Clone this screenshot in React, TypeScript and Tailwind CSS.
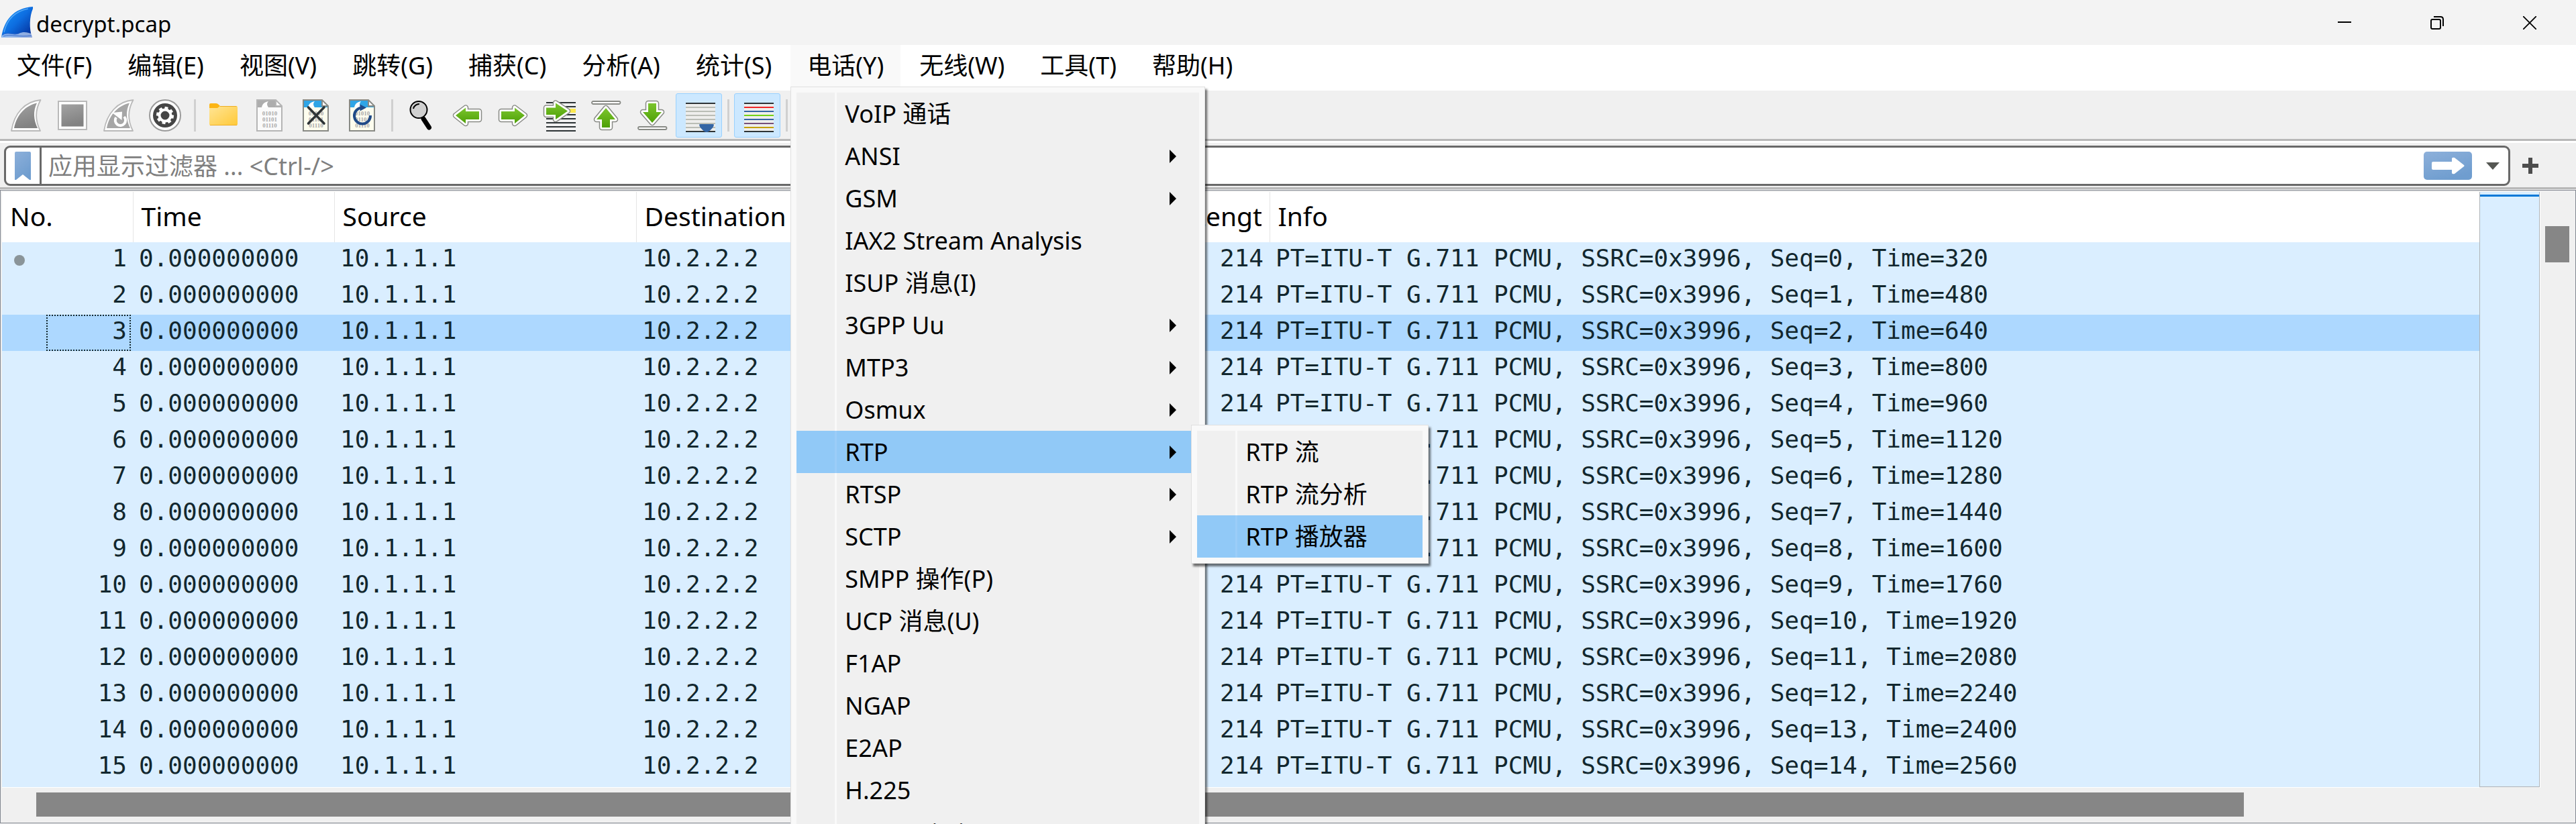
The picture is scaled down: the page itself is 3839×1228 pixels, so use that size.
import React from "react";

type MenuEntry = { label: string; submenu?: boolean };

const menuBar = [
  "文件(F)", "编辑(E)", "视图(V)", "跳转(G)", "捕获(C)", "分析(A)",
  "统计(S)", "电话(Y)", "无线(W)", "工具(T)", "帮助(H)",
];

const telephonyMenu: MenuEntry[] = [
  { label: "VoIP 通话" },
  { label: "ANSI", submenu: true },
  { label: "GSM", submenu: true },
  { label: "IAX2 Stream Analysis" },
  { label: "ISUP 消息(I)" },
  { label: "3GPP Uu", submenu: true },
  { label: "MTP3", submenu: true },
  { label: "Osmux", submenu: true },
  { label: "RTP", submenu: true },
  { label: "RTSP", submenu: true },
  { label: "SCTP", submenu: true },
  { label: "SMPP 操作(P)" },
  { label: "UCP 消息(U)" },
  { label: "F1AP" },
  { label: "NGAP" },
  { label: "E2AP" },
  { label: "H.225" },
  { label: "SIP Statistics" },
];

const rtpMenu = ["RTP 流", "RTP 流分析", "RTP 播放器"];

const packets = Array.from({ length: 15 }, (_, i) => ({
  no: i + 1,
  time: "0.000000000",
  source: "10.1.1.1",
  destination: "10.2.2.2",
  length: 214,
  info: `PT=ITU-T G.711 PCMU, SSRC=0x3996, Seq=${i}, Time=${320 + i * 160}`,
}));

function WiresharkLogo() {
  return (
    <svg className="h-[47px] w-[48px] shrink-0" viewBox="0 0 48 47" aria-hidden="true">
      <defs>
        <linearGradient id="logo" x1="0" y1="0" x2="1" y2="1">
          <stop offset="0" stopColor="#1a9cff" />
          <stop offset="0.5" stopColor="#0d6de0" />
          <stop offset="1" stopColor="#04268f" />
        </linearGradient>
      </defs>
      <path d="M47 0C18 2 4 20 0 46H46C41 33 42 14 47 3Z" fill="url(#logo)" />
      <path d="M1 43C10 36 18 44 26 40S40 39 45 40L46 46H0Z" fill="#c9dcf6" opacity="0.7" />
      <path d="M2 42C10 37 18 43 26 40M3 44C14 40 26 46 45 43" stroke="#3b6fd0" fill="none" />
      <path d="M40 3C20 7 8 20 4 38" stroke="#7fc6ff" strokeWidth="1.5" fill="none" opacity="0.6" />
    </svg>
  );
}

function Icon({ children }: { children: React.ReactNode }) {
  return (
    <svg className="h-[48px] w-[49px] overflow-visible" viewBox="0 0 49 48" aria-hidden="true">
      {children}
    </svg>
  );
}

function Fin({ fill }: { fill: string }) {
  return (
    <>
      <path d="M45.5 1C22 3 6 21 2 47H45C38 33 36 18 45.5 1Z" fill="#fff" stroke="#b9b9b9" strokeWidth="1.8" strokeLinejoin="round" />
      <path d="M40 5.5C24 9 10 22 6 43H41C35 30 34 18 40 5.5Z" fill={fill} />
    </>
  );
}

function Arrow({ d }: { d: string }) {
  return (
    <>
      <path d={d} fill="none" stroke="#888a85" strokeWidth="8.5" strokeLinejoin="round" />
      <path d={d} fill="none" stroke="#fff" strokeWidth="5.5" strokeLinejoin="round" />
      <path d={d} fill="url(#green)" />
    </>
  );
}

function FileIcon({ gray, children }: { gray?: boolean; children?: React.ReactNode }) {
  return (
    <Icon>
      <path d="M5 1H33L42 10V47H5Z" fill={gray ? "#fafafa" : "#fdfdee"} />
      <path d="M5 1H33L42 10V12H5Z" fill={gray ? "#adadad" : "#2fa5e6"} />
      <path d="M12 12C13 7 16 4 22 3C19 6 20 9 22 12Z" fill="#fff" />
      <path d="M33 1V10H42Z" fill="#fff" />
      <path d="M5 1H33L42 10V47H5ZM33 1V10H42" fill="none" stroke={gray ? "#b5b5b5" : "#888a85"} strokeWidth="2" />
      <g fontFamily="Liberation Serif" fontSize="9" fill="#aaaaaa" textAnchor="middle" fontWeight="bold">
        <text x="24" y="24">01010</text>
        <text x="24" y="33">01101</text>
        <text x="24" y="42">01110</text>
      </g>
      {children}
    </Icon>
  );
}

function Stripes({ colors }: { colors: string[] }) {
  return (
    <>
      <rect x="5" y="5" width="44" height="44" fill="#eeeeec" />
      {colors.map((c, i) => (
        <rect key={i} x="5" y={5 + i * 6} width="44" height="2" fill={c} />
      ))}
    </>
  );
}

const gearTeeth = [0, 45, 90, 135, 180, 225, 270, 315];
const ink = "#2e3436";
const pale = "#babdb6";

const tools: ({ name: string; icon: React.ReactNode; checked?: boolean } | null)[] = [
  { name: "开始捕获", icon: <Icon><Fin fill="url(#gray)" /></Icon> },
  {
    name: "停止捕获",
    icon: (
      <Icon>
        <rect x="3" y="3" width="42" height="42" fill="#fff" stroke="#b9b9b9" strokeWidth="2" />
        <rect x="7.5" y="7.5" width="33" height="33" fill="url(#gray)" />
      </Icon>
    ),
  },
  {
    name: "重新开始捕获",
    icon: (
      <Icon>
        <Fin fill="#a6a6a6" />
        <path d="M20 27A7.7 7.7 0 1 0 32 26" fill="none" stroke="#fff" strokeWidth="4" />
        <path d="M14 20L29 18.500L28.500 31Z" fill="#fff" />
      </Icon>
    ),
  },
  {
    name: "捕获选项",
    icon: (
      <Icon>
        <circle cx="24" cy="24" r="23" fill="#fff" stroke="#9a9a9a" strokeWidth="2" />
        <circle cx="24" cy="24" r="18" fill="#454545" />
        <circle cx="24" cy="24" r="8.500" fill="none" stroke="#fff" strokeWidth="4" />
        {gearTeeth.map((a) => (
          <rect key={a} x="21.500" y="11" width="5" height="5" fill="#fff" transform={`rotate(${a + 10} 24 24)`} />
        ))}
      </Icon>
    ),
  },
  null,
  {
    name: "打开",
    icon: (
      <Icon>
        <path d="M3 8Q3 6 5 6H13Q15 6 17 8L19 10V16H3Z" fill="#fcb514" />
        <path d="M3 13H15L19 10H43Q45 10 45 12V37Q45 39 43 39H5Q3 39 3 37Z" fill="url(#folder)" />
        <path d="M19 10.500H43.500M4 38.500H44" stroke="#eead22" />
      </Icon>
    ),
  },
  { name: "保存", icon: <FileIcon gray /> },
  {
    name: "关闭文件",
    icon: <FileIcon><path d="M12.500 12L36 36M36 12L12.500 36" stroke={ink} strokeWidth="3.600" strokeLinecap="round" /></FileIcon>,
  },
  {
    name: "重新加载",
    icon: (
      <FileIcon>
        <path d="M36 24A12 12 0 1 1 23 12.500" fill="none" stroke="#204a87" strokeWidth="4" />
        <path d="M20.500 7.500L30 12.500L20.500 17.500Z" fill="#204a87" />
      </FileIcon>
    ),
  },
  null,
  {
    name: "查找分组",
    icon: (
      <Icon>
        <path d="M28 29L36.500 42" stroke="#000" strokeWidth="7" strokeLinecap="round" />
        <circle cx="21" cy="15.500" r="12.500" fill="#d0d0d0" stroke="#000" strokeWidth="2" />
        <path d="M13 14A9 9 0 0 1 22 7" fill="none" stroke="#000" strokeWidth="2" />
      </Icon>
    ),
  },
  { name: "后退", icon: <Icon><Arrow d="M7 24L22 12.500V18H42V30H22V36Z" /></Icon> },
  { name: "前进", icon: <Icon><Arrow d="M41 24L26 12.500V18H6V30H26V36Z" /></Icon> },
  {
    name: "转到分组",
    icon: (
      <Icon>
        {[4, 10, 22, 28, 34, 40, 46].map((y) => (
          <rect key={y} x="4" y={y} width="44" height="2" fill={ink} />
        ))}
        <rect x="24" y="14" width="24" height="6" fill="#fce94f" />
        <Arrow d="M36 17.500L18 5.500V12.500H4V23H18V30Z" />
      </Icon>
    ),
  },
  {
    name: "首个分组",
    icon: (
      <Icon>
        <rect x="3" y="3" width="42.500" height="4" rx="2" fill="#fff" stroke="#888a85" strokeWidth="1.800" />
        <Arrow d="M24 13L38 30H30V42H18V30H10Z" />
      </Icon>
    ),
  },
  {
    name: "最新分组",
    icon: (
      <Icon>
        <rect x="3" y="41" width="42.500" height="4" rx="2" fill="#fff" stroke="#888a85" strokeWidth="1.800" />
        <Arrow d="M24 35L38 19H30V6H18V19H10Z" />
      </Icon>
    ),
  },
  {
    name: "自动滚动",
    checked: true,
    icon: (
      <Icon>
        <Stripes colors={[ink, pale, pale, pale, pale, pale, pale, ink]} />
        <path d="M25 38Q25 37 27 37H45Q47 37 47 38Q46 43 39 48Q36 50 33 48Q26 43 25 38Z" fill="#3465a4" />
      </Icon>
    ),
  },
  null,
  {
    name: "分组着色",
    checked: true,
    icon: <Icon><Stripes colors={[ink, "#ef2929", "#3465a4", "#73d216", "#3465a4", "#75507b", "#c4a000", ink]} /></Icon>,
  },
  null,
];

function MenuRow({ label, submenu, active, children }: MenuEntry & { active?: boolean; children?: React.ReactNode }) {
  return (
    <li className="relative">
      <button
        type="button"
        className={`flex h-[63px] w-full items-center text-left ${active ? "bg-[#91c9f7]" : ""}`}
      >
        <span className={`h-full w-[60px] shrink-0 border-r-[3px] ${active ? "border-[#9bcdf8]" : "border-[#f9f9f9]"}`} />
        <span className="flex-1 whitespace-nowrap pl-3">{label}</span>
        {submenu && (
          <svg className="mr-[34px] h-[20px] w-[10px]" viewBox="0 0 10 20" aria-hidden="true">
            <path d="M0 0L10 10L0 20Z" />
          </svg>
        )}
      </button>
      {children}
    </li>
  );
}

const popup =
  "absolute border border-[#e0e0e0] bg-[#f9f9f9] p-2 shadow-[3px_4px_3px_rgba(0,0,0,0.55)]";

function TelephonyMenu() {
  return (
    <div className={`${popup} left-0 top-full z-10 w-[618px]`}>
      <ul className="bg-[#f0f0f0]">
        {telephonyMenu.map((m) => (
          <MenuRow key={m.label} {...m} active={m.label === "RTP"}>
            {m.label === "RTP" && (
              <div className={`${popup} -top-[9px] left-full -ml-3 w-[354px]`}>
                <ul className="bg-[#f0f0f0]">
                  {rtpMenu.map((label) => (
                    <MenuRow key={label} label={label} active={label === "RTP 播放器"} />
                  ))}
                </ul>
              </div>
            )}
          </MenuRow>
        ))}
      </ul>
    </div>
  );
}

function TitleBar() {
  return (
    <header className="flex h-[67px] shrink-0 items-stretch bg-[#f3f3f3]">
      <div className="flex flex-1 items-center gap-1 pl-0.5">
        <WiresharkLogo />
        <h1 className="pt-1 text-[33px] leading-[48px]">decrypt.pcap</h1>
      </div>
      <button type="button" aria-label="最小化" className="flex w-[138px] items-center justify-center">
        <svg className="h-[20px] w-[20px]" viewBox="0 0 20 20"><path d="M0 9H20" stroke="#000" strokeWidth="2" /></svg>
      </button>
      <button type="button" aria-label="还原" className="flex w-[138px] items-center justify-center">
        <svg className="h-[20px] w-[20px]" viewBox="0 0 20 20" fill="none" stroke="#000" strokeWidth="2">
          <rect x="1" y="5" width="14" height="14" rx="2" />
          <path d="M5 1H15Q19 1 19 5V15" />
        </svg>
      </button>
      <button type="button" aria-label="关闭" className="flex w-[138px] items-center justify-center">
        <svg className="h-[20px] w-[20px]" viewBox="0 0 20 20" stroke="#000" strokeWidth="1.800">
          <path d="M0 0L20 20M20 0L0 20" />
        </svg>
      </button>
    </header>
  );
}

function MenuBar() {
  return (
    <nav className="flex h-[68px] shrink-0 items-start gap-[3px] border-b-2 border-white bg-white">
      {menuBar.map((label) => {
        const open = label === "电话(Y)";
        return (
          <div key={label} className="relative">
            <button
              type="button"
              className={`h-[62px] whitespace-nowrap px-[25px] ${open ? "bg-[#f9f9f9]" : ""}`}
            >
              {label}
            </button>
            {open && <TelephonyMenu />}
          </div>
        );
      })}
    </nav>
  );
}

function ToolBar() {
  return (
    <div className="flex h-[78px] shrink-0 items-start border-b-[3px] border-white bg-[#f0f0f0]">
      <div className="flex h-[75px] flex-1 items-start border-b-[3px] border-[#b8b8b8] pl-[5px] pt-1">
        {tools.map((t, i) =>
          t ? (
            <button
              key={t.name}
              type="button"
              aria-label={t.name}
              className={`flex h-[66px] w-[69px] items-center justify-center rounded-[3px] ${
                t.checked ? "border border-[#99d1ff] bg-[#cce8ff]" : ""
              }`}
            >
              {t.icon}
            </button>
          ) : (
            <span key={i} className="flex h-[66px] w-[18px] items-center justify-center">
              <span className="h-[48px] w-[3px] bg-[#d0d0d0]" />
            </span>
          ),
        )}
      </div>
    </div>
  );
}

function FilterBar() {
  return (
    <div className="flex h-[69px] shrink-0 items-start border-b-[3px] border-[#b8b8b8] bg-[#f0f0f0] pl-1.5 pt-1">
      <div className="flex h-[60px] flex-1 items-stretch rounded-[9px] border-[3px] border-[#696969] bg-white">
        <button type="button" aria-label="书签" className="flex w-[53px] items-center justify-center border-r-[3px] border-[#696969]">
          <svg className="h-[42px] w-[24px]" viewBox="0 0 24 42">
            <path d="M0 2Q0 0 2 0H22Q24 0 24 2V42H22L12 34L2 42H0Z" fill="url(#blue)" />
          </svg>
        </button>
        <input
          type="text"
          aria-label="显示过滤器"
          placeholder="应用显示过滤器 ... <Ctrl-/>"
          className="min-w-0 flex-1 bg-transparent pl-2.5 pt-0.5 outline-none placeholder:text-[#7f7f7f]"
        />
        <button type="button" aria-label="应用" className="mr-[18px] flex items-center">
          <svg className="h-[42px] w-[72px]" viewBox="0 0 72 42">
            <rect width="72" height="42" rx="5" fill="url(#blue)" />
            <path d="M14 15H42V10Q43 8 46 9L60 20Q61 21 60 22L46 33Q43 34 42 32V27H14Q12 27 12 25V17Q12 15 14 15Z" fill="#fff" />
          </svg>
        </button>
        <button type="button" aria-label="历史" className="mr-[10px] flex w-[26px] items-center justify-center">
          <svg className="h-[12px] w-[20px]" viewBox="0 0 20 12"><path d="M0 1H20L10 12Z" fill="#555753" /></svg>
        </button>
      </div>
      <button type="button" aria-label="添加" className="flex h-[60px] w-[98px] items-center pl-[18px]">
        <svg className="h-[24px] w-[24px]" viewBox="0 0 24 24"><path d="M12 0V24M0 12H24" stroke="#4d4d4d" strokeWidth="6" /></svg>
      </button>
    </div>
  );
}

const th = "h-[75px] overflow-hidden border-r border-[#e5e5e5] px-3 pt-0 pb-1 text-left font-normal";
const td = "px-[9px] pt-0 pb-1.5";

function PacketTable() {
  return (
    <table className="w-full table-fixed border-collapse">
      <colgroup>
        <col className="w-[195px]" />
        <col className="w-[300px]" />
        <col className="w-[450px]" />
        <col className="w-[816px]" />
        <col className="w-[128px]" />
        <col />
      </colgroup>
      <thead className="bg-white text-[39px] leading-[48px]">
        <tr>
          <th className={th}>No.</th>
          <th className={th}>Time</th>
          <th className={th}>Source</th>
          <th className={th}>Destination</th>
          <th className={th}><div className="overflow-hidden">Length</div></th>
          <th className="px-3 pt-0 pb-1 text-left font-normal">Info</th>
        </tr>
      </thead>
      <tbody className="font-['DejaVu_Sans_Mono',monospace] leading-[48px] text-[#12272e]">
        {packets.map((p) => {
          const selected = p.no === 3;
          return (
            <tr key={p.no} className={selected ? "bg-[#add8ff]" : "bg-[#daeeff]"}>
              <td className="p-0">
                <div className="flex h-[54px] items-center justify-between pl-[18px] pr-[3px]">
                  <span className={`size-4 rounded-full ${p.no === 1 ? "bg-[#8a9499]" : ""}`} />
                  <span
                    className={`flex h-[54px] w-[126px] items-center justify-end border-2 border-dotted pb-1.5 pr-1 ${
                      selected ? "border-[#12272e]" : "border-transparent"
                    }`}
                  >
                    {p.no}
                  </span>
                </div>
              </td>
              <td className={td}>{p.time}</td>
              <td className={td}>{p.source}</td>
              <td className={td}>{p.destination}</td>
              <td className={`${td} text-right`}>{p.length}</td>
              <td className={`${td} whitespace-nowrap`}>{p.info}</td>
            </tr>
          );
        })}
      </tbody>
    </table>
  );
}

function PacketList() {
  return (
    <main className="mb-px mt-px flex min-h-0 flex-1 flex-col border border-[#828790] bg-[#f0f0f0] p-0.5">
      <div className="flex min-h-0 flex-1">
        <div className="min-w-0 flex-1 overflow-hidden border-b border-white bg-[#daeeff]">
          <PacketTable />
        </div>
        <div className="mb-px w-[90px] border-x border-b border-[#b0b4b8] bg-[#daeeff] pt-1">
          <div className="h-[3px] bg-[#0078d7]" />
        </div>
        <div className="flex w-[51px] flex-col items-center border-l border-white pt-[51px]">
          <div className="h-[54px] w-[36px] bg-[#868686]" />
        </div>
      </div>
      <div className="flex h-[50px] items-center pl-[51px]">
        <div className="h-[36px] w-[87%] bg-[#868686]" />
      </div>
    </main>
  );
}

export default function App() {
  return (
    <div className="flex h-screen flex-col overflow-hidden bg-[#f0f0f0] font-['Noto_Sans','Noto_Sans_CJK_SC',sans-serif] text-[36px] leading-[54px] text-black">
      <svg className="absolute size-0" aria-hidden="true">
        <defs>
          <linearGradient id="gray" x1="0" y1="0" x2="0.300" y2="1">
            <stop offset="0" stopColor="#a3a3a3" />
            <stop offset="1" stopColor="#828282" />
          </linearGradient>
          <linearGradient id="green" x1="0" y1="0" x2="0" y2="1">
            <stop offset="0" stopColor="#7cc52e" />
            <stop offset="1" stopColor="#4ea006" />
          </linearGradient>
          <linearGradient id="blue" x1="0" y1="0" x2="0.500" y2="1">
            <stop offset="0" stopColor="#8db0da" />
            <stop offset="1" stopColor="#6f9dcf" />
          </linearGradient>
          <linearGradient id="folder" x1="0" y1="0" x2="1" y2="1">
            <stop offset="0" stopColor="#ffe596" />
            <stop offset="1" stopColor="#ffc938" />
          </linearGradient>
        </defs>
      </svg>
      <TitleBar />
      <MenuBar />
      <ToolBar />
      <FilterBar />
      <PacketList />
    </div>
  );
}
